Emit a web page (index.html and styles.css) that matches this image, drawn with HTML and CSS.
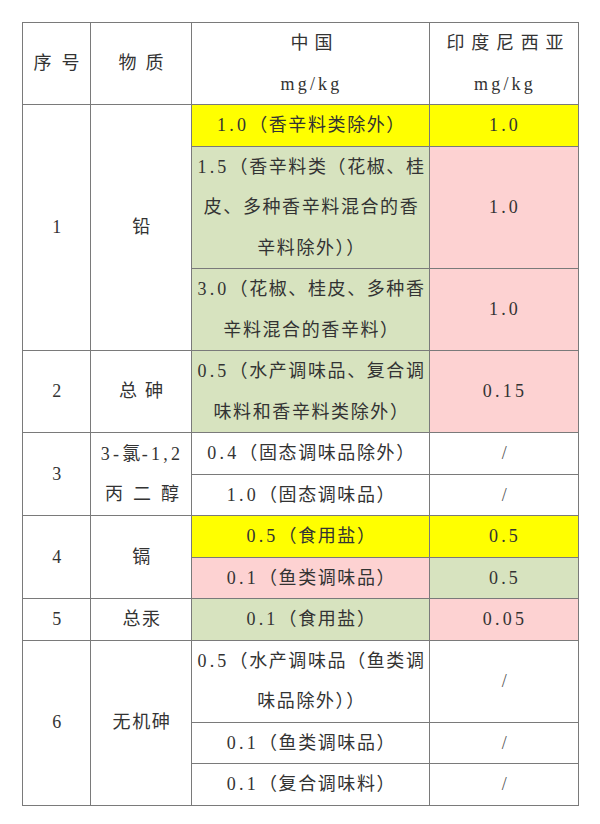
FILE: index.html
```html
<!DOCTYPE html>
<html>
<head>
<meta charset="utf-8">
<title>调味品污染物限量对比</title>
<link rel="stylesheet" href="styles.css">
</head>
<body>
<div class="page">
<table class="limits">
  <colgroup>
    <col class="c-no"><col class="c-sub"><col class="c-cn"><col class="c-id">
  </colgroup>
  <thead>
    <tr>
      <th class="sp-xl">序号</th>
      <th class="sp-l">物质</th>
      <th><span class="sp-m">中国</span><br><span class="n">mg/kg</span></th>
      <th><span class="sp-m2">印度尼西亚</span><br><span class="n">mg/kg</span></th>
    </tr>
  </thead>
  <tbody>
    <tr>
      <td rowspan="3">1</td>
      <td rowspan="3">铅</td>
      <td class="yellow"><span class="n">1.0</span>（香辛料类除外）</td>
      <td class="yellow"><span class="n">1.0</span></td>
    </tr>
    <tr>
      <td class="green"><span class="n">1.5</span>（香辛料类（花椒、桂<br>皮、多种香辛料混合的香<br>辛料除外））</td>
      <td class="pink"><span class="n">1.0</span></td>
    </tr>
    <tr>
      <td class="green"><span class="n">3.0</span>（花椒、桂皮、多种香<br>辛料混合的香辛料）</td>
      <td class="pink"><span class="n">1.0</span></td>
    </tr>
    <tr>
      <td>2</td>
      <td class="sp-l2">总砷</td>
      <td class="green"><span class="n">0.5</span>（水产调味品、复合调<br>味料和香辛料类除外）</td>
      <td class="pink"><span class="n">0.15</span></td>
    </tr>
    <tr>
      <td rowspan="2">3</td>
      <td rowspan="2"><span class="n">3-</span>氯<span class="n">-1,2</span><br><span class="sp-xl">丙二醇</span></td>
      <td><span class="n">0.4</span>（固态调味品除外）</td>
      <td class="slash">/</td>
    </tr>
    <tr>
      <td><span class="n">1.0</span>（固态调味品）</td>
      <td class="slash">/</td>
    </tr>
    <tr>
      <td rowspan="2">4</td>
      <td rowspan="2">镉</td>
      <td class="yellow"><span class="n">0.5</span>（食用盐）</td>
      <td class="yellow"><span class="n">0.5</span></td>
    </tr>
    <tr>
      <td class="pink"><span class="n">0.1</span>（鱼类调味品）</td>
      <td class="green"><span class="n">0.5</span></td>
    </tr>
    <tr>
      <td>5</td>
      <td>总汞</td>
      <td class="green"><span class="n">0.1</span>（食用盐）</td>
      <td class="pink"><span class="n">0.05</span></td>
    </tr>
    <tr>
      <td rowspan="3">6</td>
      <td rowspan="3">无机砷</td>
      <td><span class="n">0.5</span>（水产调味品（鱼类调<br>味品除外））</td>
      <td class="slash">/</td>
    </tr>
    <tr>
      <td><span class="n">0.1</span>（鱼类调味品）</td>
      <td class="slash">/</td>
    </tr>
    <tr>
      <td><span class="n">0.1</span>（复合调味料）</td>
      <td class="slash">/</td>
    </tr>
  </tbody>
</table>
</div>
</body>
</html>
```
FILE: styles.css
```css
html, body {
  margin: 0;
  padding: 0;
  background: #ffffff;
}

.page {
  padding: 22px 0 0 22px;
}

.limits {
  border-collapse: collapse;
  table-layout: fixed;
  width: 556px;
  font-family: "Liberation Serif", "Noto Sans CJK SC", serif;
  font-size: 18px;
  color: #333333;
}

.c-no { width: 68px; }
.c-sub { width: 101px; }
.c-cn { width: 238px; }
.c-id { width: 149px; }

.limits th,
.limits td {
  border: 1px solid #7a7a7a;
  padding: 0 0 0 2px;
  line-height: 40.5px;
  text-align: center;
  vertical-align: middle;
  font-weight: normal;
  letter-spacing: 1.6px;
  white-space: nowrap;
  overflow: hidden;
}

.limits .n { letter-spacing: 3.2px; }

.limits th.sp-xl { letter-spacing: 10px; padding-left: 10px; }
.limits th.sp-l { letter-spacing: 9px; padding-left: 9px; }
.limits td.sp-l2 { letter-spacing: 8px; padding-left: 8px; }
span.sp-xl { letter-spacing: 10px; margin-left: 10px; }
.sp-m { letter-spacing: 6px; margin-left: 6px; }
.sp-m2 { letter-spacing: 6.75px; margin-left: 6.75px; }

.yellow { background: #ffff00; }
.green { background: #d7e3bf; }
.pink { background: #fdd2d2; }

.slash { color: #555555; }
```
